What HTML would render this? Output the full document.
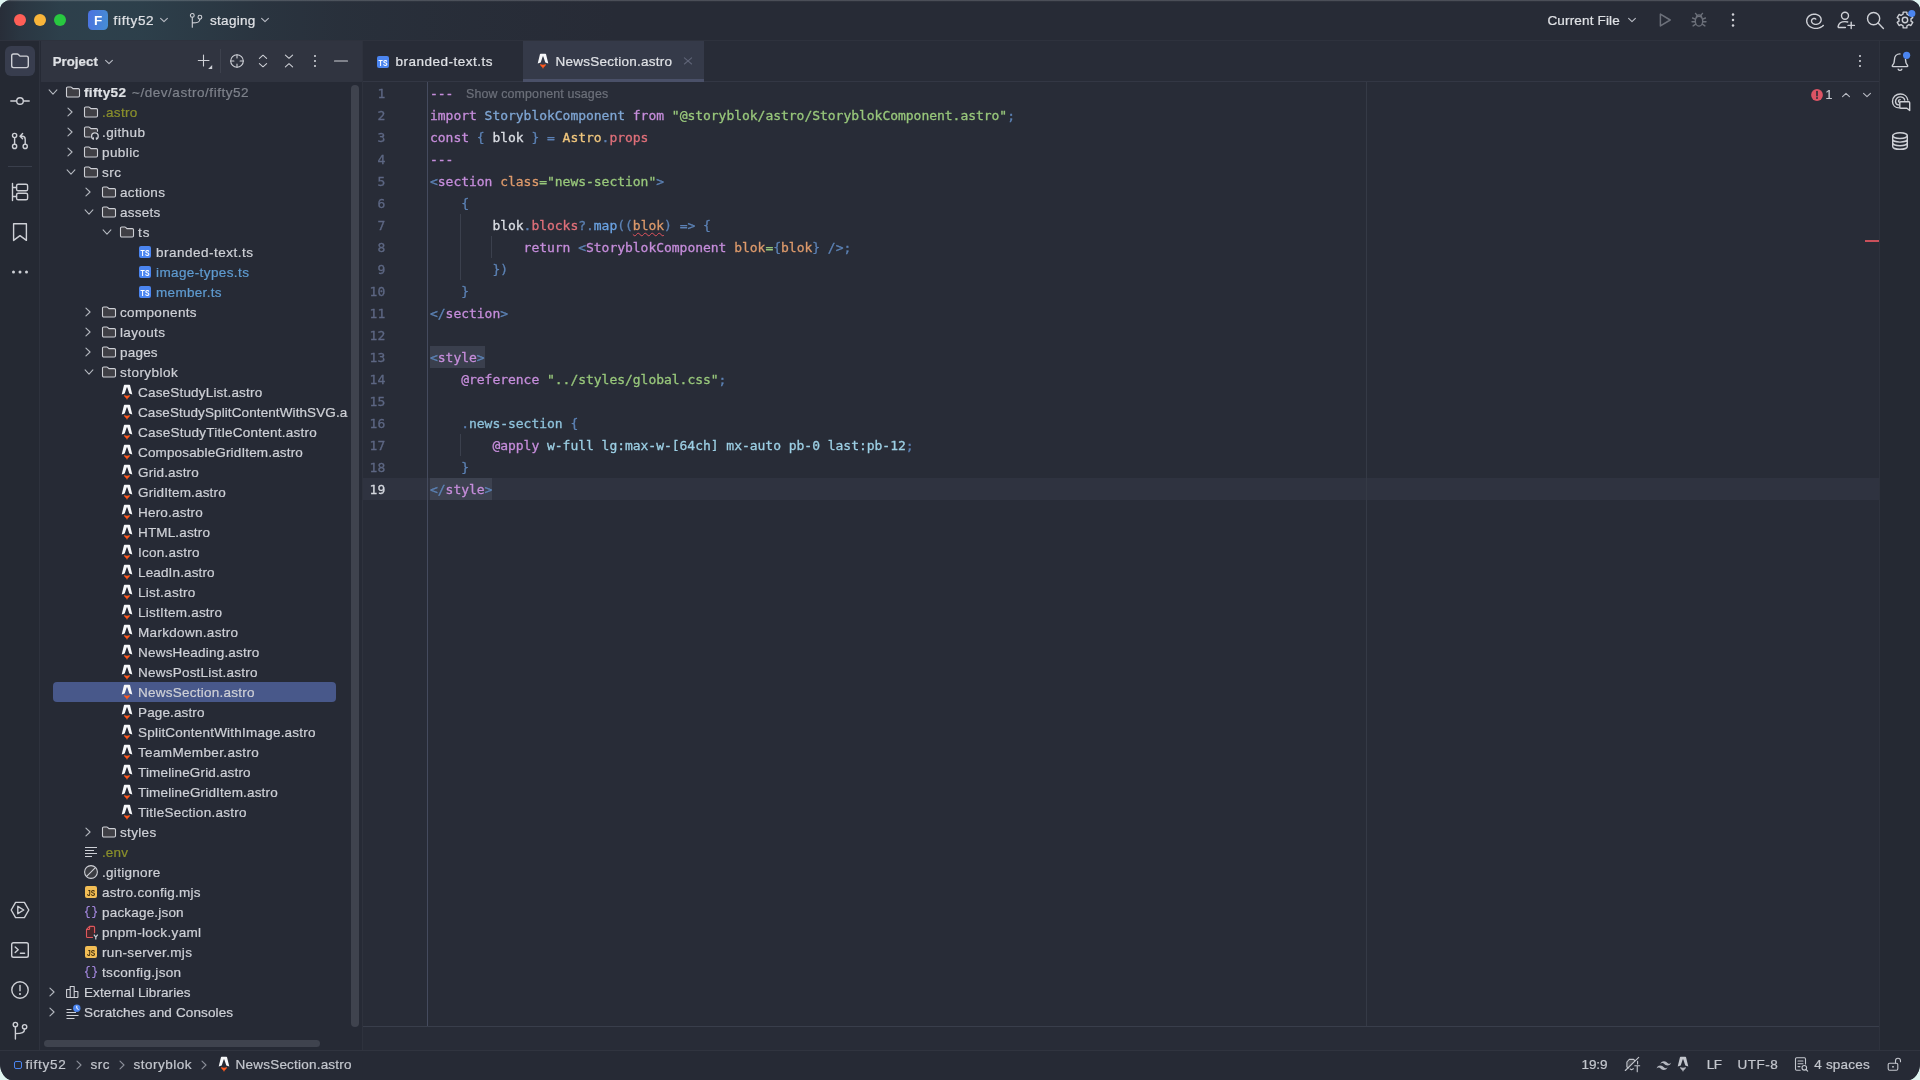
<!DOCTYPE html>
<html lang="en"><head><meta charset="utf-8"><title>fifty52 – NewsSection.astro</title>
<style>
*{box-sizing:border-box;margin:0;padding:0}
html,body{width:1920px;height:1080px;overflow:hidden;background:#dff4f0}
body{font-family:"Liberation Sans",sans-serif;font-size:13.5px;color:#ced0d6;letter-spacing:.2px;-webkit-font-smoothing:antialiased}
#win{position:absolute;left:0;top:0;width:1920px;height:1080px;border-radius:11px 11px 12px 12px / 10px 10px 17px 17px;overflow:hidden;background:#262a35}
#gl{position:absolute;left:0;top:0;width:1920px;height:1080px;will-change:transform}
.abs{position:absolute}
svg{position:absolute;overflow:visible}
.t{position:absolute;white-space:pre;line-height:20px;height:20px;margin-top:1px}
/* title bar */
#title{position:absolute;left:0;top:0;width:1920px;height:40px;background:#272b36}
#title .grad{position:absolute;left:0;top:0;width:900px;height:40px;background:linear-gradient(90deg,rgba(52,88,100,0.05) 0px,rgba(52,88,100,0.25) 20px,rgba(52,88,100,0.45) 60px,rgba(52,88,100,0.47) 100px,rgba(52,88,100,0.45) 140px,rgba(52,88,100,0.33) 200px,rgba(52,88,100,0.2) 260px,rgba(52,88,100,0.11) 340px,rgba(52,88,100,0.05) 450px,rgba(52,88,100,0) 620px)}
#title .hl{position:absolute;left:0;top:0;width:1920px;height:2px;background:linear-gradient(180deg,rgba(255,255,255,.17) 0,rgba(255,255,255,.17) 1px,rgba(255,255,255,.03) 1px,rgba(255,255,255,.03) 2px)}
#title .bb{position:absolute;left:0;top:40px;width:1920px;height:1px;background:#2e323d}
.tl{position:absolute;top:14px;width:12px;height:12px;border-radius:50%}
/* stripes */
#lstripe{position:absolute;left:0;top:41px;width:40px;height:1009px;background:#252933;border-right:1px solid #2e323d}
#rstripe{position:absolute;left:1879px;top:41px;width:41px;height:1009px;background:#252933;border-left:1px solid #2e323d}
/* project tool window */
#proj{position:absolute;left:41px;top:41px;width:321px;height:1009px;background:#262a35}
#projhead{position:absolute;left:0;top:0;width:321px;height:41px;background:#303440}
#split{position:absolute;left:362px;top:41px;width:1px;height:1009px;background:#2e323d}
/* editor */
#tabs{position:absolute;left:363px;top:41px;width:1516px;height:41px;background:#282c37;border-bottom:1px solid #333744}
#editor{position:absolute;left:363px;top:82px;width:1516px;height:968px;background:#282c37}
/* status bar */
#status{position:absolute;left:0;top:1050px;width:1920px;height:30px;background:#262a35;border-top:1px solid #30343f}
.code{font-family:"DejaVu Sans Mono","Liberation Mono",monospace;font-size:13px;letter-spacing:-0.028px}
.err{text-decoration:underline wavy #e0525c;text-decoration-thickness:1px;text-underline-offset:2px}
.t{-webkit-text-stroke:.22px currentColor}
.code{-webkit-text-stroke:.3px currentColor}

</style></head>
<body>
<div id="win"><div id="gl">
<div id="title"><div class="grad"></div><div class="hl"></div><div class="bb"></div>
<div class="tl" style="left:14px;background:#fe5f57"></div>
<div class="tl" style="left:34px;background:#f9b53a"></div>
<div class="tl" style="left:54px;background:#28c840"></div>
<div class="abs" style="left:88px;top:10px;width:20px;height:20px;border-radius:4.500px;background:linear-gradient(100deg,#4b73e0 5%,#468dd4 95%)"></div>
<span class="t " style="left:94.1px;top:10px;font-weight:bold;color:#fff;font-size:13.5px;letter-spacing:0;-webkit-text-stroke:0;">F</span>
<span class="t " style="left:113.6px;top:10px;color:#dfe1e5;letter-spacing:0.661px;">fifty52</span>
<svg style="left:156px;top:12.3px" width="16" height="16" viewBox="0 0 16 16" fill="none" ><path d="M4.6 6.3L8 9.7L11.4 6.3" stroke="#b8bcc4" stroke-width="1.1" stroke-linecap="round" stroke-linejoin="round"/></svg>
<svg style="left:187.5px;top:12px" width="16" height="16" viewBox="0 0 16 16" fill="none" ><circle cx="4.300" cy="3.400" r="1.900" stroke="#ced0d6" stroke-width="1.1" stroke-linecap="round" stroke-linejoin="round"/><circle cx="11.900" cy="5.200" r="1.900" stroke="#ced0d6" stroke-width="1.1" stroke-linecap="round" stroke-linejoin="round"/><path d="M4.300 5.400v9.800M11.900 7.200c0 2.900-2 3.700-7.600 3.700" stroke="#ced0d6" stroke-width="1.1" stroke-linecap="round" stroke-linejoin="round"/></svg>
<span class="t " style="left:210.1px;top:10px;color:#dfe1e5;letter-spacing:0.259px;">staging</span>
<svg style="left:257px;top:12.3px" width="16" height="16" viewBox="0 0 16 16" fill="none" ><path d="M4.6 6.3L8 9.7L11.4 6.3" stroke="#b8bcc4" stroke-width="1.1" stroke-linecap="round" stroke-linejoin="round"/></svg>
<span class="t " style="left:1547.4px;top:10px;color:#dfe1e5;letter-spacing:0.17px;">Current File</span>
<svg style="left:1624px;top:12.3px" width="16" height="16" viewBox="0 0 16 16" fill="none" ><path d="M4.6 6.3L8 9.7L11.4 6.3" stroke="#b8bcc4" stroke-width="1.1" stroke-linecap="round" stroke-linejoin="round"/></svg>
<svg style="left:1655px;top:10px" width="20" height="20" viewBox="0 0 20 20" fill="none" ><path d="M5.400 4.100v11.800l9.800-5.900z" stroke="#6c707a" stroke-width="1.500" stroke-linejoin="round" stroke-linecap="round"/></svg>
<svg style="left:1688.5px;top:10px" width="20" height="20" viewBox="0 0 20 20" fill="none" ><ellipse cx="10" cy="11.200" rx="3.700" ry="4.900" stroke="#6c707a" stroke-width="1.400" stroke-linecap="round" stroke-linejoin="round"/><path d="M7.300 7.600c.200-1.700 1.200-2.700 2.700-2.700s2.500 1 2.700 2.700" stroke="#6c707a" stroke-width="1.400" stroke-linecap="round" stroke-linejoin="round"/><path d="M7.700 4.900L6.500 3.400M12.300 4.900l1.200-1.500M6.300 9.200L3.600 8M13.700 9.200l2.700-1.200M6.300 11.700H3M13.700 11.700H17M6.700 14.200l-2.600 1.700M13.300 14.200l2.600 1.700" stroke="#6c707a" stroke-width="1.400" stroke-linecap="round" stroke-linejoin="round"/></svg>
<svg style="left:1722.5px;top:10px" width="20" height="20" viewBox="0 0 20 20" fill="none" ><circle cx="10" cy="4.6" r="1.25" fill="#ced0d6"/><circle cx="10" cy="10" r="1.25" fill="#ced0d6"/><circle cx="10" cy="15.4" r="1.25" fill="#ced0d6"/></svg>
<svg style="left:1804.5px;top:10px" width="20" height="20" viewBox="0 0 20 20" fill="none" ><path d="M18.35 15.37 L17.39 16.21 L16.33 16.92 L15.17 17.50 L13.94 17.93 L12.66 18.22 L11.36 18.36 L10.07 18.35 L8.80 18.19 L7.59 17.89 L6.44 17.46 L5.39 16.90 L4.44 16.24 L3.62 15.48 L2.93 14.65 L2.39 13.75 L2.01 12.81 L1.78 11.85 L1.71 10.88 L1.79 9.92 L2.02 9.00 L2.40 8.11 L2.91 7.29 L3.53 6.55 L4.27 5.89 L5.09 5.33 L5.98 4.88 L6.92 4.53 L7.90 4.31 L8.89 4.19 L9.87 4.20 L10.84 4.31 L11.76 4.54 L12.62 4.86 L13.42 5.27 L14.12 5.76 L14.74 6.33 L15.25 6.94 L15.64 7.60 L15.93 8.29 L16.09 9.00 L16.14 9.70 L16.08 10.40 L15.90 11.06 L15.63 11.69 L15.26 12.27 L14.81 12.79 L14.29 13.25 L13.71 13.63 L13.08 13.94 L12.43 14.17 L11.76 14.31 L11.08 14.38 L10.42 14.36 L9.78 14.27 L9.17 14.10 L8.61 13.88 L8.10 13.59 L7.66 13.26 L7.29 12.88 L6.99 12.48 L6.76 12.05 L6.62 11.62 L6.55 11.18 L6.55 10.76 L6.63 10.35 L6.77 9.96 L6.96 9.61 L7.21 9.30 L7.50 9.03 L7.82 8.80 L8.16 8.63 L8.52 8.50 L8.88 8.43 L9.23 8.41 L9.57 8.43 L9.88 8.50 L10.17 8.60 L10.42 8.74 L10.62 8.91 L10.76 9.11" stroke="#ced0d6" stroke-width="1.4" stroke-linecap="round" stroke-linejoin="round"/></svg>
<svg style="left:1836px;top:10px" width="20" height="20" viewBox="0 0 20 20" fill="none" ><circle cx="9" cy="5.800" r="3.500" stroke="#ced0d6" stroke-width="1.4" stroke-linecap="round" stroke-linejoin="round"/><path d="M9.400 17.500H3c-.6 0-1-.5-.9-1 .6-3 3.200-4.900 6.900-4.900 1 0 1.900.1 2.700.4M15.200 12.200v6.400M12 15.400h6.400" stroke="#ced0d6" stroke-width="1.4" stroke-linecap="round" stroke-linejoin="round"/></svg>
<svg style="left:1865px;top:10px" width="20" height="20" viewBox="0 0 20 20" fill="none" ><circle cx="8.600" cy="8.600" r="6.100" stroke="#ced0d6" stroke-width="1.4" stroke-linecap="round" stroke-linejoin="round" stroke-width="1.400"/><path d="M13.100 13.100l5.300 5.300" stroke="#ced0d6" stroke-width="1.4" stroke-linecap="round" stroke-linejoin="round" stroke-width="1.400"/></svg>
<svg style="left:1894.6px;top:10.4px" width="20" height="20" viewBox="0 0 20 20" fill="none" ><path d="M8.18 2.11L11.82 2.11L11.99 4.23L14.00 5.40L15.92 4.48L17.75 7.63L15.99 8.84L15.99 11.16L17.75 12.37L15.92 15.52L14.00 14.60L11.99 15.77L11.82 17.89L8.18 17.89L8.01 15.77L6.00 14.60L4.08 15.52L2.25 12.37L4.01 11.16L4.01 8.84L2.25 7.63L4.08 4.48L6.00 5.40L8.01 4.23Z" stroke="#ced0d6" stroke-width="1.4" stroke-linecap="round" stroke-linejoin="round" stroke-width="1.300" stroke-linejoin="round"/><circle cx="10" cy="10" r="2.700" stroke="#ced0d6" stroke-width="1.4" stroke-linecap="round" stroke-linejoin="round" stroke-width="1.300"/><circle cx="16.800" cy="3.500" r="3.600" fill="#4b85f0"/></svg>
</div>
<div id="lstripe"></div>
<div class="abs" style="left:5px;top:46px;width:30px;height:30px;border-radius:6px;background:#383d4e"></div>
<svg style="left:10px;top:51px" width="20" height="20" viewBox="0 0 20 20" fill="none" ><path d="M1.7 4.8a1.8 1.8 0 0 1 1.8-1.800h3.600a1.800 1.800 0 0 1 1.270.530l1.600 1.600h6.530a1.800 1.800 0 0 1 1.800 1.800v7.900a1.800 1.800 0 0 1-1.800 1.800H3.500a1.800 1.800 0 0 1-1.800-1.800z" stroke="#ced0d6" stroke-width="1.4" stroke-linecap="round" stroke-linejoin="round"/></svg>
<svg style="left:10px;top:91px" width="20" height="20" viewBox="0 0 20 20" fill="none" ><circle cx="10" cy="10" r="3.3" stroke="#ced0d6" stroke-width="1.4" stroke-linecap="round" stroke-linejoin="round"/><path d="M.8 10h5.6M13.6 10h5.6" stroke="#ced0d6" stroke-width="1.4" stroke-linecap="round" stroke-linejoin="round"/></svg>
<svg style="left:10px;top:131px" width="20" height="20" viewBox="0 0 20 20" fill="none" ><circle cx="4.6" cy="4.5" r="2.1" stroke="#ced0d6" stroke-width="1.4" stroke-linecap="round" stroke-linejoin="round"/><circle cx="4.6" cy="15.4" r="2.1" stroke="#ced0d6" stroke-width="1.4" stroke-linecap="round" stroke-linejoin="round"/><circle cx="15.2" cy="15.4" r="2.1" stroke="#ced0d6" stroke-width="1.4" stroke-linecap="round" stroke-linejoin="round"/><path d="M4.6 6.8v6.4M15.2 13.2V8.2a3 3 0 0 0-3-3h-1.6M12.6 2.6l-2.6 2.6 2.6 2.6" stroke="#ced0d6" stroke-width="1.4" stroke-linecap="round" stroke-linejoin="round"/></svg>
<div class="abs" style="left:8px;top:166px;width:24px;height:1px;background:#3a3f4c"></div>
<svg style="left:10px;top:182px" width="20" height="20" viewBox="0 0 20 20" fill="none" ><path d="M2.5 1.5v17M2.5 5.5h4M2.5 14.5h4" stroke="#ced0d6" stroke-width="1.4" stroke-linecap="round" stroke-linejoin="round"/><rect x="6.6" y="2.2" width="11" height="6.6" rx="1.6" stroke="#ced0d6" stroke-width="1.4" stroke-linecap="round" stroke-linejoin="round"/><rect x="6.6" y="11.2" width="11" height="6.6" rx="1.6" stroke="#ced0d6" stroke-width="1.4" stroke-linecap="round" stroke-linejoin="round"/></svg>
<svg style="left:10px;top:222px" width="20" height="20" viewBox="0 0 20 20" fill="none" ><path d="M3.6 1.8h12.8v16.6L10 13.6l-6.4 4.8z" stroke="#ced0d6" stroke-width="1.4" stroke-linecap="round" stroke-linejoin="round"/></svg>
<svg style="left:10px;top:262px" width="20" height="20" viewBox="0 0 20 20" fill="none" ><circle cx="3.5" cy="10" r="1.5" fill="#ced0d6"/><circle cx="10" cy="10" r="1.5" fill="#ced0d6"/><circle cx="16.5" cy="10" r="1.5" fill="#ced0d6"/></svg>
<svg style="left:10px;top:900px" width="20" height="20" viewBox="0 0 20 20" fill="none" ><path d="M5.6 2.4h8.8l4.4 7.6-4.4 7.6H5.6L1.2 10z" stroke="#ced0d6" stroke-width="1.4" stroke-linecap="round" stroke-linejoin="round"/><path d="M7.8 6.3v7.4l6-3.7z" stroke="#ced0d6" stroke-width="1.4" stroke-linecap="round" stroke-linejoin="round"/></svg>
<svg style="left:10px;top:940px" width="20" height="20" viewBox="0 0 20 20" fill="none" ><rect x="1.7" y="2.7" width="16.6" height="14.6" rx="1.8" stroke="#ced0d6" stroke-width="1.4" stroke-linecap="round" stroke-linejoin="round"/><path d="M5.2 7l3 2.8-3 2.8M10.4 13.2h4.2" stroke="#ced0d6" stroke-width="1.4" stroke-linecap="round" stroke-linejoin="round"/></svg>
<svg style="left:10px;top:980px" width="20" height="20" viewBox="0 0 20 20" fill="none" ><circle cx="10" cy="10" r="8.2" stroke="#ced0d6" stroke-width="1.4" stroke-linecap="round" stroke-linejoin="round"/><path d="M10 5.4v5.4" stroke="#ced0d6" stroke-width="1.4" stroke-linecap="round" stroke-linejoin="round" stroke-width="1.6"/><circle cx="10" cy="14" r="1.05" fill="#ced0d6"/></svg>
<svg style="left:10px;top:1020px" width="20" height="20" viewBox="0 0 20 20" fill="none" ><circle cx="5.4" cy="4.6" r="2.2" stroke="#ced0d6" stroke-width="1.4" stroke-linecap="round" stroke-linejoin="round"/><circle cx="14.6" cy="6.8" r="2.2" stroke="#ced0d6" stroke-width="1.4" stroke-linecap="round" stroke-linejoin="round"/><path d="M5.4 6.9V19M14.6 9.1c0 3.4-2.4 4.5-9.2 4.5" stroke="#ced0d6" stroke-width="1.4" stroke-linecap="round" stroke-linejoin="round"/></svg>
<div id="rstripe"></div>
<svg style="left:1890px;top:51.6px" width="20" height="20" viewBox="0 0 20 20" fill="none" ><path d="M10 1.9c-3.4 0-5.5 2.5-5.5 5.6 0 2.9-.7 4.6-2.1 6.1-.3.4-.1 1 .5 1h14.2c.6 0 .8-.6.5-1-1.4-1.5-2.1-3.2-2.1-6.100" stroke="#ced0d6" stroke-width="1.4" stroke-linecap="round" stroke-linejoin="round"/><path d="M8.2 17.2c.4.8 1 1.2 1.8 1.2s1.400-.4 1.800-1.2" stroke="#ced0d6" stroke-width="1.4" stroke-linecap="round" stroke-linejoin="round"/><circle cx="16.600" cy="3.300" r="3.600" fill="#4b85f0"/></svg>
<svg style="left:1890.5px;top:92px" width="20" height="20" viewBox="0 0 20 20" fill="none" ><path d="M8.200 15.900C4.3 15.900 1.500 13.200 1.500 9.400 1.500 5.100 5 2 9.300 2c4 0 7 2.600 7.500 6" stroke="#ced0d6" stroke-width="1.4" stroke-linecap="round" stroke-linejoin="round"/><path d="M7.500 12.900C5.700 12.600 4.500 11.200 4.500 9.400c0-2.600 2.100-4.500 4.800-4.500 2.300 0 3.900 1.300 4.400 3.200" stroke="#ced0d6" stroke-width="1.4" stroke-linecap="round" stroke-linejoin="round"/><path d="M8.400 10.200c-.5-.1-.900-.5-.900-1.100 0-.9.800-1.500 1.700-1.500" stroke="#ced0d6" stroke-width="1.4" stroke-linecap="round" stroke-linejoin="round"/><path d="M9.700 9.800h8.100c.5 0 .9.400.9.900v7.800l-2.800-2.300h-6.200c-.5 0-.9-.4-.9-.9v-4.600c0-.5.400-.9.900-.9z" fill="#252933" stroke="#ced0d6" stroke-width="1.4" stroke-linecap="round" stroke-linejoin="round"/></svg>
<svg style="left:1890px;top:131px" width="20" height="20" viewBox="0 0 20 20" fill="none" ><ellipse cx="10" cy="4.6" rx="7.300" ry="2.900" stroke="#ced0d6" stroke-width="1.4" stroke-linecap="round" stroke-linejoin="round"/><path d="M2.700 4.600v10.800c0 1.600 3.300 2.900 7.300 2.900s7.300-1.300 7.300-2.900V4.600M2.700 8.200c0 1.600 3.300 2.900 7.300 2.900s7.300-1.300 7.300-2.900M2.700 11.800c0 1.600 3.300 2.900 7.300 2.900s7.300-1.300 7.300-2.900" stroke="#ced0d6" stroke-width="1.4" stroke-linecap="round" stroke-linejoin="round"/></svg>
<div id="proj"><div id="projhead"></div></div><div id="split"></div>
<span class="t " style="left:52.7px;top:51px;color:#dfe1e5;letter-spacing:0.064px;font-size:13.2px;font-weight:bold;">Project</span>
<svg style="left:101px;top:53.5px" width="16" height="16" viewBox="0 0 16 16" fill="none" ><path d="M4.6 6.3L8 9.7L11.4 6.3" stroke="#b8bcc4" stroke-width="1.1" stroke-linecap="round" stroke-linejoin="round"/></svg>
<svg style="left:196px;top:53px" width="16" height="16" viewBox="0 0 16 16" fill="none" ><path d="M7.500 2v11M2.300 7.500h10.700" stroke="#ced0d6" stroke-width="1.100" stroke-linecap="round" stroke-linejoin="round"/><path d="M16.200 12.100v3.900h-4z" fill="#ced0d6"/></svg>
<div class="abs" style="left:220px;top:49px;width:1px;height:24px;background:#3d414d"></div>
<svg style="left:229px;top:53px" width="16" height="16" viewBox="0 0 16 16" fill="none" ><circle cx="8" cy="8" r="6.300" stroke="#ced0d6" stroke-width="1.100" stroke-linecap="round" stroke-linejoin="round"/><path d="M8 1.700v3.200M8 11.100v3.200M1.700 8h3.200M11.100 8h3.200" stroke="#ced0d6" stroke-width="1.100" stroke-linecap="round" stroke-linejoin="round"/></svg>
<svg style="left:255px;top:53px" width="16" height="16" viewBox="0 0 16 16" fill="none" ><path d="M4.400 5.300L8 2.200l3.600 3.100M4.400 10.700L8 13.800l3.600-3.100" stroke="#ced0d6" stroke-width="1.100" stroke-linecap="round" stroke-linejoin="round"/></svg>
<svg style="left:281px;top:53px" width="16" height="16" viewBox="0 0 16 16" fill="none" ><path d="M4.400 2.100L8 5.300l3.600-3.200M4.400 13.900L8 10.700l3.600 3.200" stroke="#ced0d6" stroke-width="1.100" stroke-linecap="round" stroke-linejoin="round"/></svg>
<svg style="left:305px;top:51px" width="20" height="20" viewBox="0 0 20 20" fill="none" ><circle cx="10" cy="5" r="1.05" fill="#ced0d6"/><circle cx="10" cy="10" r="1.05" fill="#ced0d6"/><circle cx="10" cy="15" r="1.05" fill="#ced0d6"/></svg>
<svg style="left:333px;top:53px" width="16" height="16" viewBox="0 0 16 16" fill="none" ><path d="M1.500 8h13" stroke="#ced0d6" stroke-width="1.100" stroke-linecap="round" stroke-linejoin="round" stroke-width="1.200"/></svg>
<div id="tabs"></div>
<div class="abs" style="left:523px;top:41px;width:181px;height:41px;background:#353a49"></div>
<div class="abs" style="left:523px;top:79px;width:181px;height:3px;background:#4a5068"></div>
<svg style="left:374.5px;top:53.5px" width="16" height="16" viewBox="0 0 16 16" fill="none" ><rect x="2" y="2" width="12" height="12" rx="2" fill="#4b85f0"/><text x="3.600" y="12" textLength="9" lengthAdjust="spacingAndGlyphs" font-family="Liberation Sans,sans-serif" font-weight="bold" font-size="9.600" fill="#fff">TS</text></svg>
<span class="t " style="left:395.4px;top:51px;color:#dfe1e5;letter-spacing:0.503px;">branded-text.ts</span>
<svg style="left:535px;top:53px" width="16" height="16" viewBox="0 0 16 16" fill="none" ><path d="M5.6 .7H10.4Q10.9 .7 11.05 1.2L13.3 10.6Q11.9 9.9 10.3 9.6L8.3 3.5Q8 2.9 7.7 3.5L5.7 9.6Q4.1 9.9 2.7 10.6L4.95 1.2Q5.1 .7 5.6 .7Z" fill="#f6f7f9"/><path d="M5.1 11Q8 12.5 10.9 11Q11 12.9 9.4 13.7Q8.4 14.2 8.2 15.4Q8 15.9 7.8 15.4Q7.6 14.2 6.600 13.700Q5 12.900 5.100 11Z" fill="#ff5a1f"/></svg>
<span class="t " style="left:555.6px;top:51px;color:#dfe1e5;letter-spacing:0.24px;">NewsSection.astro</span>
<svg style="left:680px;top:53px" width="16" height="16" viewBox="0 0 16 16" fill="none" ><path d="M4.400 4.800l7.200 6.200M11.600 4.800l-7.200 6.200" stroke="#5e6376" stroke-width="1.100" stroke-linecap="round"/></svg>
<svg style="left:1850px;top:51px" width="20" height="20" viewBox="0 0 20 20" fill="none" ><circle cx="10" cy="5" r="1.05" fill="#ced0d6"/><circle cx="10" cy="10" r="1.05" fill="#ced0d6"/><circle cx="10" cy="15" r="1.05" fill="#ced0d6"/></svg>
<div id="status"></div>
<div class="abs" style="left:13.800px;top:1060.500px;width:8px;height:8px;border:1.500px solid #4b85f0;border-radius:2px"></div>
<span class="t " style="left:25.4px;top:1054px;color:#c3c6cd;letter-spacing:0.711px;">fifty52</span>
<svg style="left:71px;top:1056.5px" width="16" height="16" viewBox="0 0 16 16" fill="none" ><path d="M6.0 4.2L10.0 8L6.0 11.8" stroke="#8b8f99" stroke-width="1.1" stroke-linecap="round" stroke-linejoin="round"/></svg>
<span class="t " style="left:90.6px;top:1054px;color:#c3c6cd;letter-spacing:0.45px;">src</span>
<svg style="left:114px;top:1056.5px" width="16" height="16" viewBox="0 0 16 16" fill="none" ><path d="M6.0 4.2L10.0 8L6.0 11.8" stroke="#8b8f99" stroke-width="1.1" stroke-linecap="round" stroke-linejoin="round"/></svg>
<span class="t " style="left:133.6px;top:1054px;color:#c3c6cd;letter-spacing:0.484px;">storyblok</span>
<svg style="left:196px;top:1056.5px" width="16" height="16" viewBox="0 0 16 16" fill="none" ><path d="M6.0 4.2L10.0 8L6.0 11.8" stroke="#8b8f99" stroke-width="1.1" stroke-linecap="round" stroke-linejoin="round"/></svg>
<svg style="left:216px;top:1056px" width="16" height="16" viewBox="0 0 16 16" fill="none" ><path d="M5.6 .7H10.4Q10.9 .7 11.05 1.2L13.3 10.6Q11.9 9.9 10.3 9.6L8.3 3.5Q8 2.9 7.7 3.5L5.7 9.6Q4.1 9.9 2.7 10.6L4.95 1.2Q5.1 .7 5.6 .7Z" fill="#f6f7f9"/><path d="M5.1 11Q8 12.5 10.9 11Q11 12.9 9.4 13.7Q8.4 14.2 8.2 15.4Q8 15.9 7.8 15.4Q7.6 14.2 6.600 13.700Q5 12.900 5.100 11Z" fill="#ff5a1f"/></svg>
<span class="t " style="left:235.6px;top:1054px;color:#c3c6cd;letter-spacing:0.209px;">NewsSection.astro</span>
<span class="t " style="left:1581.5px;top:1054px;color:#c3c6cd;letter-spacing:-0.094px;">19:9</span>
<span class="t " style="left:1706.7px;top:1054px;color:#c3c6cd;letter-spacing:-0.566px;">LF</span>
<span class="t " style="left:1737.6px;top:1054px;color:#c3c6cd;letter-spacing:0.487px;">UTF-8</span>
<span class="t " style="left:1814.2px;top:1054px;color:#c3c6cd;letter-spacing:0.222px;">4 spaces</span>
<svg style="left:1624px;top:1056px" width="16" height="16" viewBox="0 0 16 16" fill="none" ><path d="M2.900 11V6L5.300 3.400h4.300l1.500 1.500-6.800 6.900z" fill="#43464e"/><path d="M4.400 11.900L2.900 11V6L5.300 3.400h4.300l1.300 1.300M6.200 13.100l1.300.600 1.900-.900" stroke="#c3c6cd" stroke-width="1.100" stroke-linecap="round" stroke-linejoin="round"/><path d="M1.300 14.500L14.700 1.300" stroke="#c3c6cd" stroke-width="1.100" stroke-linecap="round" stroke-linejoin="round"/><path d="M10.800 9.700h4.900M13.250 9.700v6M13.600 5.300v2.600" stroke="#c3c6cd" stroke-width="1.100" stroke-linecap="round" stroke-linejoin="round"/></svg>
<svg style="left:1656px;top:1056.9px" width="16" height="16" viewBox="0 0 16 16" fill="none" ><path d="M8 4.200c-2 0-3.200 1-3.700 3 .7-1 1.600-1.400 2.600-1.100.6.100 1 .6 1.400 1 .700.700 1.500 1.500 3.200 1.500 2 0 3.200-1 3.700-3-.700 1-1.600 1.400-2.600 1.100-.600-.100-1-.600-1.400-1-.700-.700-1.500-1.500-3.200-1.500zM4.300 8.600c-2 0-3.200 1-3.700 3 .700-1 1.600-1.400 2.600-1.100.600.100 1 .600 1.400 1 .700.700 1.500 1.500 3.200 1.500 2 0 3.200-1 3.700-3-.700 1-1.600 1.400-2.600 1.100-.600-.100-1-.600-1.400-1-.700-.700-1.500-1.500-3.200-1.500z" fill="#b4b7bf"/></svg>
<svg style="left:1675px;top:1056.4px" width="16" height="16" viewBox="0 0 16 16" fill="none" ><path d="M5.6 .7H10.4Q10.9 .7 11.05 1.2L13.3 10.6Q11.9 9.9 10.3 9.6L8.3 3.5Q8 2.9 7.7 3.5L5.7 9.6Q4.1 9.9 2.7 10.6L4.95 1.2Q5.1 .7 5.6 .7Z" fill="#c3c6cd"/><path d="M5.1 11Q8 12.5 10.9 11Q11 12.9 9.4 13.7Q8.4 14.2 8.2 15.4Q8 15.9 7.8 15.4Q7.6 14.2 6.600 13.700Q5 12.900 5.100 11Z" fill="#b4b7bf"/></svg>
<svg style="left:1792.5px;top:1056px" width="16" height="16" viewBox="0 0 16 16" fill="none" ><path d="M7.200 14.200H3.600c-.6 0-1.100-.500-1.100-1.100V2.900c0-.6.500-1.100 1.100-1.100h7.800c.6 0 1.100.5 1.100 1.100v5M5 5h5M5 7.800h5M5 10.600h2" stroke="#c3c6cd" stroke-width="1.100" stroke-linecap="round" stroke-linejoin="round"/><circle cx="11.300" cy="11.800" r="2.300" stroke="#c3c6cd" stroke-width="1.100" stroke-linecap="round" stroke-linejoin="round"/><path d="M13 13.500l1.700 1.700" stroke="#c3c6cd" stroke-width="1.100" stroke-linecap="round" stroke-linejoin="round"/></svg>
<svg style="left:1886.4px;top:1056px" width="16" height="16" viewBox="0 0 16 16" fill="none" ><rect x="2.200" y="7.200" width="9.600" height="7" rx="1.400" stroke="#c3c6cd" stroke-width="1.100" stroke-linecap="round" stroke-linejoin="round"/><path d="M9.500 7V4.800c0-1.500 1.100-2.600 2.500-2.600s2.500 1.100 2.500 2.600v.9" stroke="#c3c6cd" stroke-width="1.100" stroke-linecap="round" stroke-linejoin="round"/><rect x="6.200" y="10" width="1.600" height="1.600" fill="#c3c6cd"/></svg>
<div id="tree" class="abs" style="left:41px;top:82px;width:306.5px;height:950px;overflow:hidden">
<svg style="left:3.5px;top:2px" width="16" height="16" viewBox="0 0 16 16" fill="none" ><path d="M4.1 5.95L8 10.05L11.9 5.95" stroke="#b4b8bf" stroke-width="1.1" stroke-linecap="round" stroke-linejoin="round"/></svg>
<svg style="left:24px;top:2px" width="16" height="16" viewBox="0 0 16 16" fill="none" ><path d="M1.5 4.2 a1.2 1.2 0 0 1 1.2-1.2 h3.1 a1.2 1.2 0 0 1 .85.35 l1.25 1.25 h5.4 a1.2 1.2 0 0 1 1.2 1.2 v6 a1.2 1.2 0 0 1-1.2 1.2 h-10.6 a1.2 1.2 0 0 1-1.2-1.2 z" fill="#3f3f45" stroke="#ced0d6" stroke-width="1.1" stroke-linejoin="round"/></svg>
<span class="t" style="left:43px;top:0px;font-weight:bold;color:#dfe1e5;letter-spacing:0.356px">fifty52</span>
<span class="t" style="left:91px;top:0px;color:#7e828b;letter-spacing:0.537px">~/dev/astro/fifty52</span>
<svg style="left:21.1px;top:21.5px" width="16" height="16" viewBox="0 0 16 16" fill="none" ><path d="M5.95 4.1L10.05 8L5.95 11.9" stroke="#b4b8bf" stroke-width="1.1" stroke-linecap="round" stroke-linejoin="round"/></svg>
<svg style="left:42px;top:22px" width="16" height="16" viewBox="0 0 16 16" fill="none" ><path d="M1.5 4.2 a1.2 1.2 0 0 1 1.2-1.2 h3.1 a1.2 1.2 0 0 1 .85.35 l1.25 1.25 h5.4 a1.2 1.2 0 0 1 1.2 1.2 v6 a1.2 1.2 0 0 1-1.2 1.2 h-10.6 a1.2 1.2 0 0 1-1.2-1.2 z" fill="#3f3f45" stroke="#ced0d6" stroke-width="1.1" stroke-linejoin="round"/></svg>
<span class="t" style="left:61px;top:20px;color:#8a8f2c;letter-spacing:0.307px;">.astro</span>
<svg style="left:21.1px;top:41.5px" width="16" height="16" viewBox="0 0 16 16" fill="none" ><path d="M5.95 4.1L10.05 8L5.95 11.9" stroke="#b4b8bf" stroke-width="1.1" stroke-linecap="round" stroke-linejoin="round"/></svg>
<svg style="left:42px;top:42px" width="16" height="16" viewBox="0 0 16 16" fill="none" ><path d="M7.2 13 h-4.5 a1.2 1.2 0 0 1-1.2-1.2 v-7.6 a1.2 1.2 0 0 1 1.2-1.2 h3.1 a1.2 1.2 0 0 1 .85.35 l1.25 1.25 h5.4 a1.2 1.2 0 0 1 1.2 1.2 v1.4" fill="#3f3f45" stroke="#ced0d6" stroke-width="1.1" stroke-linejoin="round" stroke-linecap="round"/><circle cx="11.900" cy="12.100" r="3.300" stroke="#ced0d6" stroke-width="1.350" fill="#262a35"/><path d="M10.700 16.300v-2.100l1.200-.700 1.200.700v2.100z" fill="#262a35"/><path d="M10.500 15v-1.300M13.300 15v-1.300" stroke="#ced0d6" stroke-width="1" stroke-linecap="round"/></svg>
<span class="t" style="left:61px;top:40px;letter-spacing:0.392px;">.github</span>
<svg style="left:21.1px;top:61.5px" width="16" height="16" viewBox="0 0 16 16" fill="none" ><path d="M5.95 4.1L10.05 8L5.95 11.9" stroke="#b4b8bf" stroke-width="1.1" stroke-linecap="round" stroke-linejoin="round"/></svg>
<svg style="left:42px;top:62px" width="16" height="16" viewBox="0 0 16 16" fill="none" ><path d="M1.5 4.2 a1.2 1.2 0 0 1 1.2-1.2 h3.1 a1.2 1.2 0 0 1 .85.35 l1.25 1.25 h5.4 a1.2 1.2 0 0 1 1.2 1.2 v6 a1.2 1.2 0 0 1-1.2 1.2 h-10.6 a1.2 1.2 0 0 1-1.2-1.2 z" fill="#3f3f45" stroke="#ced0d6" stroke-width="1.1" stroke-linejoin="round"/></svg>
<span class="t" style="left:61px;top:60px;letter-spacing:0.404px;">public</span>
<svg style="left:21.5px;top:82px" width="16" height="16" viewBox="0 0 16 16" fill="none" ><path d="M4.1 5.95L8 10.05L11.9 5.95" stroke="#b4b8bf" stroke-width="1.1" stroke-linecap="round" stroke-linejoin="round"/></svg>
<svg style="left:42px;top:82px" width="16" height="16" viewBox="0 0 16 16" fill="none" ><path d="M1.5 4.2 a1.2 1.2 0 0 1 1.2-1.2 h3.1 a1.2 1.2 0 0 1 .85.35 l1.25 1.25 h5.4 a1.2 1.2 0 0 1 1.2 1.2 v6 a1.2 1.2 0 0 1-1.2 1.2 h-10.6 a1.2 1.2 0 0 1-1.2-1.2 z" fill="#3f3f45" stroke="#ced0d6" stroke-width="1.1" stroke-linejoin="round"/></svg>
<span class="t" style="left:61px;top:80px;letter-spacing:0.45px;">src</span>
<svg style="left:39.1px;top:101.5px" width="16" height="16" viewBox="0 0 16 16" fill="none" ><path d="M5.95 4.1L10.05 8L5.95 11.9" stroke="#b4b8bf" stroke-width="1.1" stroke-linecap="round" stroke-linejoin="round"/></svg>
<svg style="left:60px;top:102px" width="16" height="16" viewBox="0 0 16 16" fill="none" ><path d="M1.5 4.2 a1.2 1.2 0 0 1 1.2-1.2 h3.1 a1.2 1.2 0 0 1 .85.35 l1.25 1.25 h5.4 a1.2 1.2 0 0 1 1.2 1.2 v6 a1.2 1.2 0 0 1-1.2 1.2 h-10.6 a1.2 1.2 0 0 1-1.2-1.2 z" fill="#3f3f45" stroke="#ced0d6" stroke-width="1.1" stroke-linejoin="round"/></svg>
<span class="t" style="left:79px;top:100px;letter-spacing:0.353px;">actions</span>
<svg style="left:39.5px;top:122px" width="16" height="16" viewBox="0 0 16 16" fill="none" ><path d="M4.1 5.95L8 10.05L11.9 5.95" stroke="#b4b8bf" stroke-width="1.1" stroke-linecap="round" stroke-linejoin="round"/></svg>
<svg style="left:60px;top:122px" width="16" height="16" viewBox="0 0 16 16" fill="none" ><path d="M1.5 4.2 a1.2 1.2 0 0 1 1.2-1.2 h3.1 a1.2 1.2 0 0 1 .85.35 l1.25 1.25 h5.4 a1.2 1.2 0 0 1 1.2 1.2 v6 a1.2 1.2 0 0 1-1.2 1.2 h-10.6 a1.2 1.2 0 0 1-1.2-1.2 z" fill="#3f3f45" stroke="#ced0d6" stroke-width="1.1" stroke-linejoin="round"/></svg>
<span class="t" style="left:79px;top:120px;letter-spacing:0.254px;">assets</span>
<svg style="left:57.5px;top:142px" width="16" height="16" viewBox="0 0 16 16" fill="none" ><path d="M4.1 5.95L8 10.05L11.9 5.95" stroke="#b4b8bf" stroke-width="1.1" stroke-linecap="round" stroke-linejoin="round"/></svg>
<svg style="left:78px;top:142px" width="16" height="16" viewBox="0 0 16 16" fill="none" ><path d="M1.5 4.2 a1.2 1.2 0 0 1 1.2-1.2 h3.1 a1.2 1.2 0 0 1 .85.35 l1.25 1.25 h5.4 a1.2 1.2 0 0 1 1.2 1.2 v6 a1.2 1.2 0 0 1-1.2 1.2 h-10.6 a1.2 1.2 0 0 1-1.2-1.2 z" fill="#3f3f45" stroke="#ced0d6" stroke-width="1.1" stroke-linejoin="round"/></svg>
<span class="t" style="left:97px;top:140px;letter-spacing:1.084px;">ts</span>
<svg style="left:96px;top:162px" width="16" height="16" viewBox="0 0 16 16" fill="none" ><rect x="2" y="2" width="12" height="12" rx="2" fill="#4b85f0"/><text x="3.600" y="12" textLength="9" lengthAdjust="spacingAndGlyphs" font-family="Liberation Sans,sans-serif" font-weight="bold" font-size="9.600" fill="#fff">TS</text></svg>
<span class="t" style="left:115px;top:160px;letter-spacing:0.488px;">branded-text.ts</span>
<svg style="left:96px;top:182px" width="16" height="16" viewBox="0 0 16 16" fill="none" ><rect x="2" y="2" width="12" height="12" rx="2" fill="#4b85f0"/><text x="3.600" y="12" textLength="9" lengthAdjust="spacingAndGlyphs" font-family="Liberation Sans,sans-serif" font-weight="bold" font-size="9.600" fill="#fff">TS</text></svg>
<span class="t" style="left:115px;top:180px;color:#5f9bd0;letter-spacing:0.393px;">image-types.ts</span>
<svg style="left:96px;top:202px" width="16" height="16" viewBox="0 0 16 16" fill="none" ><rect x="2" y="2" width="12" height="12" rx="2" fill="#4b85f0"/><text x="3.600" y="12" textLength="9" lengthAdjust="spacingAndGlyphs" font-family="Liberation Sans,sans-serif" font-weight="bold" font-size="9.600" fill="#fff">TS</text></svg>
<span class="t" style="left:115px;top:200px;color:#5f9bd0;letter-spacing:0.321px;">member.ts</span>
<svg style="left:39.1px;top:221.5px" width="16" height="16" viewBox="0 0 16 16" fill="none" ><path d="M5.95 4.1L10.05 8L5.95 11.9" stroke="#b4b8bf" stroke-width="1.1" stroke-linecap="round" stroke-linejoin="round"/></svg>
<svg style="left:60px;top:222px" width="16" height="16" viewBox="0 0 16 16" fill="none" ><path d="M1.5 4.2 a1.2 1.2 0 0 1 1.2-1.2 h3.1 a1.2 1.2 0 0 1 .85.35 l1.25 1.25 h5.4 a1.2 1.2 0 0 1 1.2 1.2 v6 a1.2 1.2 0 0 1-1.2 1.2 h-10.6 a1.2 1.2 0 0 1-1.2-1.2 z" fill="#3f3f45" stroke="#ced0d6" stroke-width="1.1" stroke-linejoin="round"/></svg>
<span class="t" style="left:79px;top:220px;letter-spacing:0.339px;">components</span>
<svg style="left:39.1px;top:241.5px" width="16" height="16" viewBox="0 0 16 16" fill="none" ><path d="M5.95 4.1L10.05 8L5.95 11.9" stroke="#b4b8bf" stroke-width="1.1" stroke-linecap="round" stroke-linejoin="round"/></svg>
<svg style="left:60px;top:242px" width="16" height="16" viewBox="0 0 16 16" fill="none" ><path d="M1.5 4.2 a1.2 1.2 0 0 1 1.2-1.2 h3.1 a1.2 1.2 0 0 1 .85.35 l1.25 1.25 h5.4 a1.2 1.2 0 0 1 1.2 1.2 v6 a1.2 1.2 0 0 1-1.2 1.2 h-10.6 a1.2 1.2 0 0 1-1.2-1.2 z" fill="#3f3f45" stroke="#ced0d6" stroke-width="1.1" stroke-linejoin="round"/></svg>
<span class="t" style="left:79px;top:240px;letter-spacing:0.353px;">layouts</span>
<svg style="left:39.1px;top:261.5px" width="16" height="16" viewBox="0 0 16 16" fill="none" ><path d="M5.95 4.1L10.05 8L5.95 11.9" stroke="#b4b8bf" stroke-width="1.1" stroke-linecap="round" stroke-linejoin="round"/></svg>
<svg style="left:60px;top:262px" width="16" height="16" viewBox="0 0 16 16" fill="none" ><path d="M1.5 4.2 a1.2 1.2 0 0 1 1.2-1.2 h3.1 a1.2 1.2 0 0 1 .85.35 l1.25 1.25 h5.4 a1.2 1.2 0 0 1 1.2 1.2 v6 a1.2 1.2 0 0 1-1.2 1.2 h-10.6 a1.2 1.2 0 0 1-1.2-1.2 z" fill="#3f3f45" stroke="#ced0d6" stroke-width="1.1" stroke-linejoin="round"/></svg>
<span class="t" style="left:79px;top:260px;letter-spacing:0.201px;">pages</span>
<svg style="left:39.5px;top:282px" width="16" height="16" viewBox="0 0 16 16" fill="none" ><path d="M4.1 5.95L8 10.05L11.9 5.95" stroke="#b4b8bf" stroke-width="1.1" stroke-linecap="round" stroke-linejoin="round"/></svg>
<svg style="left:60px;top:282px" width="16" height="16" viewBox="0 0 16 16" fill="none" ><path d="M1.5 4.2 a1.2 1.2 0 0 1 1.2-1.2 h3.1 a1.2 1.2 0 0 1 .85.35 l1.25 1.25 h5.4 a1.2 1.2 0 0 1 1.2 1.2 v6 a1.2 1.2 0 0 1-1.2 1.2 h-10.6 a1.2 1.2 0 0 1-1.2-1.2 z" fill="#3f3f45" stroke="#ced0d6" stroke-width="1.1" stroke-linejoin="round"/></svg>
<span class="t" style="left:79px;top:280px;letter-spacing:0.459px;">storyblok</span>
<svg style="left:78px;top:302px" width="16" height="16" viewBox="0 0 16 16" fill="none" ><path d="M5.6 .7H10.4Q10.9 .7 11.05 1.2L13.3 10.6Q11.9 9.9 10.3 9.6L8.3 3.5Q8 2.9 7.7 3.5L5.7 9.6Q4.1 9.9 2.7 10.6L4.95 1.2Q5.1 .7 5.6 .7Z" fill="#f6f7f9"/><path d="M5.1 11Q8 12.5 10.9 11Q11 12.9 9.4 13.7Q8.4 14.2 8.2 15.4Q8 15.9 7.8 15.4Q7.6 14.2 6.600 13.700Q5 12.900 5.100 11Z" fill="#ff5a1f"/></svg>
<span class="t" style="left:97px;top:300px;letter-spacing:0.188px;">CaseStudyList.astro</span>
<svg style="left:78px;top:322px" width="16" height="16" viewBox="0 0 16 16" fill="none" ><path d="M5.6 .7H10.4Q10.9 .7 11.05 1.2L13.3 10.6Q11.9 9.9 10.3 9.6L8.3 3.5Q8 2.9 7.7 3.5L5.7 9.6Q4.1 9.9 2.7 10.6L4.95 1.2Q5.1 .7 5.6 .7Z" fill="#f6f7f9"/><path d="M5.1 11Q8 12.5 10.9 11Q11 12.9 9.4 13.7Q8.4 14.2 8.2 15.4Q8 15.9 7.8 15.4Q7.6 14.2 6.600 13.700Q5 12.900 5.100 11Z" fill="#ff5a1f"/></svg>
<span class="t" style="left:97px;top:320px;letter-spacing:0.101px;">CaseStudySplitContentWithSVG.astro</span>
<svg style="left:78px;top:342px" width="16" height="16" viewBox="0 0 16 16" fill="none" ><path d="M5.6 .7H10.4Q10.9 .7 11.05 1.2L13.3 10.6Q11.9 9.9 10.3 9.6L8.3 3.5Q8 2.9 7.7 3.5L5.7 9.6Q4.1 9.9 2.7 10.6L4.95 1.2Q5.1 .7 5.6 .7Z" fill="#f6f7f9"/><path d="M5.1 11Q8 12.5 10.9 11Q11 12.9 9.4 13.7Q8.4 14.2 8.2 15.4Q8 15.9 7.8 15.4Q7.6 14.2 6.600 13.700Q5 12.900 5.100 11Z" fill="#ff5a1f"/></svg>
<span class="t" style="left:97px;top:340px;letter-spacing:0.258px;">CaseStudyTitleContent.astro</span>
<svg style="left:78px;top:362px" width="16" height="16" viewBox="0 0 16 16" fill="none" ><path d="M5.6 .7H10.4Q10.9 .7 11.05 1.2L13.3 10.6Q11.9 9.9 10.3 9.6L8.3 3.5Q8 2.9 7.7 3.5L5.7 9.6Q4.1 9.9 2.7 10.6L4.95 1.2Q5.1 .7 5.6 .7Z" fill="#f6f7f9"/><path d="M5.1 11Q8 12.5 10.9 11Q11 12.9 9.4 13.7Q8.4 14.2 8.2 15.4Q8 15.9 7.8 15.4Q7.6 14.2 6.600 13.700Q5 12.900 5.100 11Z" fill="#ff5a1f"/></svg>
<span class="t" style="left:97px;top:360px;letter-spacing:0.151px;">ComposableGridItem.astro</span>
<svg style="left:78px;top:382px" width="16" height="16" viewBox="0 0 16 16" fill="none" ><path d="M5.6 .7H10.4Q10.9 .7 11.05 1.2L13.3 10.6Q11.9 9.9 10.3 9.6L8.3 3.5Q8 2.9 7.7 3.5L5.7 9.6Q4.1 9.9 2.7 10.6L4.95 1.2Q5.1 .7 5.6 .7Z" fill="#f6f7f9"/><path d="M5.1 11Q8 12.5 10.9 11Q11 12.9 9.4 13.7Q8.4 14.2 8.2 15.4Q8 15.9 7.8 15.4Q7.6 14.2 6.600 13.700Q5 12.900 5.100 11Z" fill="#ff5a1f"/></svg>
<span class="t" style="left:97px;top:380px;letter-spacing:0.169px;">Grid.astro</span>
<svg style="left:78px;top:402px" width="16" height="16" viewBox="0 0 16 16" fill="none" ><path d="M5.6 .7H10.4Q10.9 .7 11.05 1.2L13.3 10.6Q11.9 9.9 10.3 9.6L8.3 3.5Q8 2.9 7.7 3.5L5.7 9.6Q4.1 9.9 2.7 10.6L4.95 1.2Q5.1 .7 5.6 .7Z" fill="#f6f7f9"/><path d="M5.1 11Q8 12.5 10.9 11Q11 12.9 9.4 13.7Q8.4 14.2 8.2 15.4Q8 15.9 7.8 15.4Q7.6 14.2 6.600 13.700Q5 12.900 5.100 11Z" fill="#ff5a1f"/></svg>
<span class="t" style="left:97px;top:400px;letter-spacing:0.167px;">GridItem.astro</span>
<svg style="left:78px;top:422px" width="16" height="16" viewBox="0 0 16 16" fill="none" ><path d="M5.6 .7H10.4Q10.9 .7 11.05 1.2L13.3 10.6Q11.9 9.9 10.3 9.6L8.3 3.5Q8 2.9 7.7 3.5L5.7 9.6Q4.1 9.9 2.7 10.6L4.95 1.2Q5.1 .7 5.6 .7Z" fill="#f6f7f9"/><path d="M5.1 11Q8 12.5 10.9 11Q11 12.9 9.4 13.7Q8.4 14.2 8.2 15.4Q8 15.9 7.8 15.4Q7.6 14.2 6.600 13.700Q5 12.900 5.100 11Z" fill="#ff5a1f"/></svg>
<span class="t" style="left:97px;top:420px;letter-spacing:0.197px;">Hero.astro</span>
<svg style="left:78px;top:442px" width="16" height="16" viewBox="0 0 16 16" fill="none" ><path d="M5.6 .7H10.4Q10.9 .7 11.05 1.2L13.3 10.6Q11.9 9.9 10.3 9.6L8.3 3.5Q8 2.9 7.7 3.5L5.7 9.6Q4.1 9.9 2.7 10.6L4.95 1.2Q5.1 .7 5.6 .7Z" fill="#f6f7f9"/><path d="M5.1 11Q8 12.5 10.9 11Q11 12.9 9.4 13.7Q8.4 14.2 8.2 15.4Q8 15.9 7.8 15.4Q7.6 14.2 6.600 13.700Q5 12.900 5.100 11Z" fill="#ff5a1f"/></svg>
<span class="t" style="left:97px;top:440px;letter-spacing:0.154px;">HTML.astro</span>
<svg style="left:78px;top:462px" width="16" height="16" viewBox="0 0 16 16" fill="none" ><path d="M5.6 .7H10.4Q10.9 .7 11.05 1.2L13.3 10.6Q11.9 9.9 10.3 9.6L8.3 3.5Q8 2.9 7.7 3.5L5.7 9.6Q4.1 9.9 2.7 10.6L4.95 1.2Q5.1 .7 5.6 .7Z" fill="#f6f7f9"/><path d="M5.1 11Q8 12.5 10.9 11Q11 12.9 9.4 13.7Q8.4 14.2 8.2 15.4Q8 15.9 7.8 15.4Q7.6 14.2 6.600 13.700Q5 12.900 5.100 11Z" fill="#ff5a1f"/></svg>
<span class="t" style="left:97px;top:460px;letter-spacing:0.247px;">Icon.astro</span>
<svg style="left:78px;top:482px" width="16" height="16" viewBox="0 0 16 16" fill="none" ><path d="M5.6 .7H10.4Q10.9 .7 11.05 1.2L13.3 10.6Q11.9 9.9 10.3 9.6L8.3 3.5Q8 2.9 7.7 3.5L5.7 9.6Q4.1 9.9 2.7 10.6L4.95 1.2Q5.1 .7 5.6 .7Z" fill="#f6f7f9"/><path d="M5.1 11Q8 12.5 10.9 11Q11 12.9 9.4 13.7Q8.4 14.2 8.2 15.4Q8 15.9 7.8 15.4Q7.6 14.2 6.600 13.700Q5 12.900 5.100 11Z" fill="#ff5a1f"/></svg>
<span class="t" style="left:97px;top:480px;letter-spacing:0.14px;">LeadIn.astro</span>
<svg style="left:78px;top:502px" width="16" height="16" viewBox="0 0 16 16" fill="none" ><path d="M5.6 .7H10.4Q10.9 .7 11.05 1.2L13.3 10.6Q11.9 9.9 10.3 9.6L8.3 3.5Q8 2.9 7.7 3.5L5.7 9.6Q4.1 9.9 2.7 10.6L4.95 1.2Q5.1 .7 5.6 .7Z" fill="#f6f7f9"/><path d="M5.1 11Q8 12.5 10.9 11Q11 12.9 9.4 13.7Q8.4 14.2 8.2 15.4Q8 15.9 7.8 15.4Q7.6 14.2 6.600 13.700Q5 12.900 5.100 11Z" fill="#ff5a1f"/></svg>
<span class="t" style="left:97px;top:500px;letter-spacing:0.269px;">List.astro</span>
<svg style="left:78px;top:522px" width="16" height="16" viewBox="0 0 16 16" fill="none" ><path d="M5.6 .7H10.4Q10.9 .7 11.05 1.2L13.3 10.6Q11.9 9.9 10.3 9.6L8.3 3.5Q8 2.9 7.7 3.5L5.7 9.6Q4.1 9.9 2.7 10.6L4.95 1.2Q5.1 .7 5.6 .7Z" fill="#f6f7f9"/><path d="M5.1 11Q8 12.5 10.9 11Q11 12.9 9.4 13.7Q8.4 14.2 8.2 15.4Q8 15.9 7.8 15.4Q7.6 14.2 6.600 13.700Q5 12.900 5.100 11Z" fill="#ff5a1f"/></svg>
<span class="t" style="left:97px;top:520px;letter-spacing:0.236px;">ListItem.astro</span>
<svg style="left:78px;top:542px" width="16" height="16" viewBox="0 0 16 16" fill="none" ><path d="M5.6 .7H10.4Q10.9 .7 11.05 1.2L13.3 10.6Q11.9 9.9 10.3 9.6L8.3 3.5Q8 2.9 7.7 3.5L5.7 9.6Q4.1 9.9 2.7 10.6L4.95 1.2Q5.1 .7 5.6 .7Z" fill="#f6f7f9"/><path d="M5.1 11Q8 12.5 10.9 11Q11 12.9 9.4 13.7Q8.4 14.2 8.2 15.4Q8 15.9 7.8 15.4Q7.6 14.2 6.600 13.700Q5 12.900 5.100 11Z" fill="#ff5a1f"/></svg>
<span class="t" style="left:97px;top:540px;letter-spacing:0.312px;">Markdown.astro</span>
<svg style="left:78px;top:562px" width="16" height="16" viewBox="0 0 16 16" fill="none" ><path d="M5.6 .7H10.4Q10.9 .7 11.05 1.2L13.3 10.6Q11.9 9.9 10.3 9.6L8.3 3.5Q8 2.9 7.7 3.5L5.7 9.6Q4.1 9.9 2.7 10.6L4.95 1.2Q5.1 .7 5.6 .7Z" fill="#f6f7f9"/><path d="M5.1 11Q8 12.5 10.9 11Q11 12.9 9.4 13.7Q8.4 14.2 8.2 15.4Q8 15.9 7.8 15.4Q7.6 14.2 6.600 13.700Q5 12.900 5.100 11Z" fill="#ff5a1f"/></svg>
<span class="t" style="left:97px;top:560px;letter-spacing:0.212px;">NewsHeading.astro</span>
<svg style="left:78px;top:582px" width="16" height="16" viewBox="0 0 16 16" fill="none" ><path d="M5.6 .7H10.4Q10.9 .7 11.05 1.2L13.3 10.6Q11.9 9.9 10.3 9.6L8.3 3.5Q8 2.9 7.7 3.5L5.7 9.6Q4.1 9.9 2.7 10.6L4.95 1.2Q5.1 .7 5.6 .7Z" fill="#f6f7f9"/><path d="M5.1 11Q8 12.5 10.9 11Q11 12.9 9.4 13.7Q8.4 14.2 8.2 15.4Q8 15.9 7.8 15.4Q7.6 14.2 6.600 13.700Q5 12.900 5.100 11Z" fill="#ff5a1f"/></svg>
<span class="t" style="left:97px;top:580px;letter-spacing:0.227px;">NewsPostList.astro</span>
<div class="abs" style="left:12px;top:600px;width:283px;height:20px;border-radius:4px;background:#48588a"></div>
<svg style="left:78px;top:602px" width="16" height="16" viewBox="0 0 16 16" fill="none" ><path d="M5.6 .7H10.4Q10.9 .7 11.05 1.2L13.3 10.6Q11.9 9.9 10.3 9.6L8.3 3.5Q8 2.9 7.7 3.5L5.7 9.6Q4.1 9.9 2.7 10.6L4.95 1.2Q5.1 .7 5.6 .7Z" fill="#f6f7f9"/><path d="M5.1 11Q8 12.5 10.9 11Q11 12.9 9.4 13.7Q8.4 14.2 8.2 15.4Q8 15.9 7.8 15.4Q7.6 14.2 6.600 13.700Q5 12.900 5.100 11Z" fill="#ff5a1f"/></svg>
<span class="t" style="left:97px;top:600px;letter-spacing:0.24px;">NewsSection.astro</span>
<svg style="left:78px;top:622px" width="16" height="16" viewBox="0 0 16 16" fill="none" ><path d="M5.6 .7H10.4Q10.9 .7 11.05 1.2L13.3 10.6Q11.9 9.9 10.3 9.6L8.3 3.5Q8 2.9 7.7 3.5L5.7 9.6Q4.1 9.9 2.7 10.6L4.95 1.2Q5.1 .7 5.6 .7Z" fill="#f6f7f9"/><path d="M5.1 11Q8 12.5 10.9 11Q11 12.9 9.4 13.7Q8.4 14.2 8.2 15.4Q8 15.9 7.8 15.4Q7.6 14.2 6.600 13.700Q5 12.900 5.100 11Z" fill="#ff5a1f"/></svg>
<span class="t" style="left:97px;top:620px;letter-spacing:0.123px;">Page.astro</span>
<svg style="left:78px;top:642px" width="16" height="16" viewBox="0 0 16 16" fill="none" ><path d="M5.6 .7H10.4Q10.9 .7 11.05 1.2L13.3 10.6Q11.9 9.9 10.3 9.6L8.3 3.5Q8 2.9 7.7 3.5L5.7 9.6Q4.1 9.9 2.7 10.6L4.95 1.2Q5.1 .7 5.6 .7Z" fill="#f6f7f9"/><path d="M5.1 11Q8 12.5 10.9 11Q11 12.9 9.4 13.7Q8.4 14.2 8.2 15.4Q8 15.9 7.8 15.4Q7.6 14.2 6.600 13.700Q5 12.900 5.100 11Z" fill="#ff5a1f"/></svg>
<span class="t" style="left:97px;top:640px;letter-spacing:0.218px;">SplitContentWithImage.astro</span>
<svg style="left:78px;top:662px" width="16" height="16" viewBox="0 0 16 16" fill="none" ><path d="M5.6 .7H10.4Q10.9 .7 11.05 1.2L13.3 10.6Q11.9 9.9 10.3 9.6L8.3 3.5Q8 2.9 7.7 3.5L5.7 9.6Q4.1 9.9 2.7 10.6L4.95 1.2Q5.1 .7 5.6 .7Z" fill="#f6f7f9"/><path d="M5.1 11Q8 12.5 10.9 11Q11 12.9 9.4 13.7Q8.4 14.2 8.2 15.4Q8 15.9 7.8 15.4Q7.6 14.2 6.600 13.700Q5 12.900 5.100 11Z" fill="#ff5a1f"/></svg>
<span class="t" style="left:97px;top:660px;letter-spacing:0.35px;">TeamMember.astro</span>
<svg style="left:78px;top:682px" width="16" height="16" viewBox="0 0 16 16" fill="none" ><path d="M5.6 .7H10.4Q10.9 .7 11.05 1.2L13.3 10.6Q11.9 9.9 10.3 9.6L8.3 3.5Q8 2.9 7.7 3.5L5.7 9.6Q4.1 9.9 2.7 10.6L4.95 1.2Q5.1 .7 5.6 .7Z" fill="#f6f7f9"/><path d="M5.1 11Q8 12.5 10.9 11Q11 12.9 9.4 13.7Q8.4 14.2 8.2 15.4Q8 15.9 7.8 15.4Q7.6 14.2 6.600 13.700Q5 12.900 5.100 11Z" fill="#ff5a1f"/></svg>
<span class="t" style="left:97px;top:680px;letter-spacing:0.166px;">TimelineGrid.astro</span>
<svg style="left:78px;top:702px" width="16" height="16" viewBox="0 0 16 16" fill="none" ><path d="M5.6 .7H10.4Q10.9 .7 11.05 1.2L13.3 10.6Q11.9 9.9 10.3 9.6L8.3 3.5Q8 2.9 7.7 3.5L5.7 9.6Q4.1 9.9 2.7 10.6L4.95 1.2Q5.1 .7 5.6 .7Z" fill="#f6f7f9"/><path d="M5.1 11Q8 12.5 10.9 11Q11 12.9 9.4 13.7Q8.4 14.2 8.2 15.4Q8 15.9 7.8 15.4Q7.6 14.2 6.600 13.700Q5 12.900 5.100 11Z" fill="#ff5a1f"/></svg>
<span class="t" style="left:97px;top:700px;letter-spacing:0.174px;">TimelineGridItem.astro</span>
<svg style="left:78px;top:722px" width="16" height="16" viewBox="0 0 16 16" fill="none" ><path d="M5.6 .7H10.4Q10.9 .7 11.05 1.2L13.3 10.6Q11.9 9.9 10.3 9.6L8.3 3.5Q8 2.9 7.7 3.5L5.7 9.6Q4.1 9.9 2.7 10.6L4.95 1.2Q5.1 .7 5.6 .7Z" fill="#f6f7f9"/><path d="M5.1 11Q8 12.5 10.9 11Q11 12.9 9.4 13.7Q8.4 14.2 8.2 15.4Q8 15.9 7.8 15.4Q7.6 14.2 6.600 13.700Q5 12.900 5.100 11Z" fill="#ff5a1f"/></svg>
<span class="t" style="left:97px;top:720px;letter-spacing:0.283px;">TitleSection.astro</span>
<svg style="left:39.1px;top:741.5px" width="16" height="16" viewBox="0 0 16 16" fill="none" ><path d="M5.95 4.1L10.05 8L5.95 11.9" stroke="#b4b8bf" stroke-width="1.1" stroke-linecap="round" stroke-linejoin="round"/></svg>
<svg style="left:60px;top:742px" width="16" height="16" viewBox="0 0 16 16" fill="none" ><path d="M1.5 4.2 a1.2 1.2 0 0 1 1.2-1.2 h3.1 a1.2 1.2 0 0 1 .85.35 l1.25 1.25 h5.4 a1.2 1.2 0 0 1 1.2 1.2 v6 a1.2 1.2 0 0 1-1.2 1.2 h-10.6 a1.2 1.2 0 0 1-1.2-1.2 z" fill="#3f3f45" stroke="#ced0d6" stroke-width="1.1" stroke-linejoin="round"/></svg>
<span class="t" style="left:79px;top:740px;letter-spacing:0.337px;">styles</span>
<svg style="left:42px;top:762px" width="16" height="16" viewBox="0 0 16 16" fill="none" ><path d="M2 3.5h12M2 6.5h9M2 9.5h12M2 12.5h7" stroke="#ced0d6" stroke-width="1.1"/></svg>
<span class="t" style="left:61px;top:760px;color:#8a8f2c;letter-spacing:0.123px;">.env</span>
<svg style="left:42px;top:782px" width="16" height="16" viewBox="0 0 16 16" fill="none" ><circle cx="8" cy="8" r="6.4" stroke="#ced0d6" stroke-width="1.1" fill="#3a3c42"/><path d="M3.6 12.4L12.4 3.6" stroke="#ced0d6" stroke-width="1.1"/></svg>
<span class="t" style="left:61px;top:780px;letter-spacing:0.295px;">.gitignore</span>
<svg style="left:42px;top:802px" width="16" height="16" viewBox="0 0 16 16" fill="none" ><rect x="2" y="2" width="12" height="12" rx="2" fill="#f2bd55"/><text x="4" y="12" textLength="8.400" lengthAdjust="spacingAndGlyphs" font-family="Liberation Sans,sans-serif" font-weight="bold" font-size="9.600" fill="#3d2a0c">JS</text></svg>
<span class="t" style="left:61px;top:800px;letter-spacing:0.27px;">astro.config.mjs</span>
<svg style="left:42px;top:822px" width="16" height="16" viewBox="0 0 16 16" fill="none" ><path d="M6.3 2.5 h-.6 a1.6 1.6 0 0 0-1.6 1.6 v2.1 a1.3 1.3 0 0 1-1.3 1.3 v1 a1.3 1.3 0 0 1 1.3 1.3 v2.1 a1.6 1.6 0 0 0 1.6 1.6 h.6" stroke="#a98be6" stroke-width="1.15" stroke-linejoin="round" stroke-linecap="round"/><path d="M9.7 2.5 h.6 a1.6 1.6 0 0 1 1.6 1.6 v2.1 a1.3 1.3 0 0 0 1.3 1.3 v1 a1.3 1.3 0 0 0-1.3 1.3 v2.1 a1.6 1.6 0 0 1-1.6 1.6 h-.6" stroke="#a98be6" stroke-width="1.15" stroke-linejoin="round" stroke-linecap="round"/></svg>
<span class="t" style="left:61px;top:820px;letter-spacing:0.185px;">package.json</span>
<svg style="left:42px;top:842px" width="16" height="16" viewBox="0 0 16 16" fill="none" ><path d="M3.5 5.4l3-3h4a1.1 1.1 0 0 1 1.1 1.1v9a1.1 1.1 0 0 1-1.1 1.1h-5.9a1.1 1.1 0 0 1-1.1-1.1z" fill="#45262a"/><path d="M9.6 13.5 h-5 a1.1 1.1 0 0 1-1.1-1.1 v-7 l3-3 h4 a1.1 1.1 0 0 1 1.1 1.1 v5.2" stroke="#e0575c" stroke-width="1.1" stroke-linecap="round" stroke-linejoin="round"/><path d="M6.6 2.5 v2.2 a.8.8 0 0 1-.8.8 h-2.2" stroke="#e0575c" stroke-width="1.1" stroke-linejoin="round"/><rect x="10" y="9.5" width="6" height="6.5" fill="#262a35"/><path d="M10.9 10.6l1.9 2.5 1.9-2.5M12.8 13.1v2.4" stroke="#ced0d6" stroke-width="1.2" /></svg>
<span class="t" style="left:61px;top:840px;letter-spacing:0.351px;">pnpm-lock.yaml</span>
<svg style="left:42px;top:862px" width="16" height="16" viewBox="0 0 16 16" fill="none" ><rect x="2" y="2" width="12" height="12" rx="2" fill="#f2bd55"/><text x="4" y="12" textLength="8.400" lengthAdjust="spacingAndGlyphs" font-family="Liberation Sans,sans-serif" font-weight="bold" font-size="9.600" fill="#3d2a0c">JS</text></svg>
<span class="t" style="left:61px;top:860px;letter-spacing:0.337px;">run-server.mjs</span>
<svg style="left:42px;top:882px" width="16" height="16" viewBox="0 0 16 16" fill="none" ><path d="M6.3 2.5 h-.6 a1.6 1.6 0 0 0-1.6 1.6 v2.1 a1.3 1.3 0 0 1-1.3 1.3 v1 a1.3 1.3 0 0 1 1.3 1.3 v2.1 a1.6 1.6 0 0 0 1.6 1.6 h.6" stroke="#a98be6" stroke-width="1.15" stroke-linejoin="round" stroke-linecap="round"/><path d="M9.7 2.5 h.6 a1.6 1.6 0 0 1 1.6 1.6 v2.1 a1.3 1.3 0 0 0 1.3 1.3 v1 a1.3 1.3 0 0 0-1.3 1.3 v2.1 a1.6 1.6 0 0 1-1.6 1.6 h-.6" stroke="#a98be6" stroke-width="1.15" stroke-linejoin="round" stroke-linecap="round"/></svg>
<span class="t" style="left:61px;top:880px;letter-spacing:0.338px;">tsconfig.json</span>
<svg style="left:3.1px;top:901.5px" width="16" height="16" viewBox="0 0 16 16" fill="none" ><path d="M5.95 4.1L10.05 8L5.95 11.9" stroke="#b4b8bf" stroke-width="1.1" stroke-linecap="round" stroke-linejoin="round"/></svg>
<svg style="left:24px;top:902px" width="16" height="16" viewBox="0 0 16 16" fill="none" ><path d="M1.6 13.5v-8h3.6v8M5.2 13.5v-11h4v11M9.2 13.5v-6h3.7v6M1.6 13.5h11.3" stroke="#ced0d6" stroke-width="1.1" stroke-linejoin="round" fill="none"/></svg>
<span class="t" style="left:43px;top:900px;letter-spacing:0.091px;">External Libraries</span>
<svg style="left:3.1px;top:921.5px" width="16" height="16" viewBox="0 0 16 16" fill="none" ><path d="M5.95 4.1L10.05 8L5.95 11.9" stroke="#b4b8bf" stroke-width="1.1" stroke-linecap="round" stroke-linejoin="round"/></svg>
<svg style="left:24px;top:922px" width="16" height="16" viewBox="0 0 16 16" fill="none" ><path d="M1.5 5.5h5M1.5 8.5h9.5M1.5 11.5h12M1.5 14.5h8" stroke="#ced0d6" stroke-width="1.1"/><circle cx="11.8" cy="4.2" r="3.7" fill="#4b85f0"/><path d="M11.8 2.2v2.2l1.4.9" stroke="#fff" stroke-width="1" fill="none" stroke-linecap="round"/></svg>
<span class="t" style="left:43px;top:920px;letter-spacing:0.131px;">Scratches and Consoles</span>
</div>
<div class="abs" style="left:351px;top:85px;width:8px;height:942px;border-radius:4px;background:#3f434e"></div>
<div class="abs" style="left:44px;top:1040px;width:276px;height:7px;border-radius:4px;background:#3f434e"></div>
<div id="editor">
<div class="abs" style="left:0;top:396px;width:1516px;height:22px;background:#2f3340"></div>
<div class="abs" style="left:67px;top:264px;width:54.6px;height:22px;background:#3a3f4d"></div>
<div class="abs" style="left:67px;top:396px;width:62.4px;height:22px;background:#3d4250"></div>
<div class="abs" style="left:64px;top:0;width:1px;height:944px;background:#454b5e"></div>
<div class="abs" style="left:1003px;top:0;width:1px;height:944px;background:#353a46"></div>
<div class="abs" style="left:0;top:944px;width:1516px;height:1px;background:#393e4b"></div>
<div class="abs" style="left:97px;top:132px;width:1px;height:66px;background:#3b404d"></div>
<div class="abs" style="left:128px;top:154px;width:1px;height:22px;background:#3b404d"></div>
<div class="abs" style="left:97px;top:352px;width:1px;height:22px;background:#3b404d"></div>
<span class="t code" style="right:1493.8px;top:0px;line-height:22px;height:22px;color:#5d6783">1</span>
<span class="t code" style="right:1493.8px;top:22px;line-height:22px;height:22px;color:#5d6783">2</span>
<span class="t code" style="right:1493.8px;top:44px;line-height:22px;height:22px;color:#5d6783">3</span>
<span class="t code" style="right:1493.8px;top:66px;line-height:22px;height:22px;color:#5d6783">4</span>
<span class="t code" style="right:1493.8px;top:88px;line-height:22px;height:22px;color:#5d6783">5</span>
<span class="t code" style="right:1493.8px;top:110px;line-height:22px;height:22px;color:#5d6783">6</span>
<span class="t code" style="right:1493.8px;top:132px;line-height:22px;height:22px;color:#5d6783">7</span>
<span class="t code" style="right:1493.8px;top:154px;line-height:22px;height:22px;color:#5d6783">8</span>
<span class="t code" style="right:1493.8px;top:176px;line-height:22px;height:22px;color:#5d6783">9</span>
<span class="t code" style="right:1493.8px;top:198px;line-height:22px;height:22px;color:#5d6783">10</span>
<span class="t code" style="right:1493.8px;top:220px;line-height:22px;height:22px;color:#5d6783">11</span>
<span class="t code" style="right:1493.8px;top:242px;line-height:22px;height:22px;color:#5d6783">12</span>
<span class="t code" style="right:1493.8px;top:264px;line-height:22px;height:22px;color:#5d6783">13</span>
<span class="t code" style="right:1493.8px;top:286px;line-height:22px;height:22px;color:#5d6783">14</span>
<span class="t code" style="right:1493.8px;top:308px;line-height:22px;height:22px;color:#5d6783">15</span>
<span class="t code" style="right:1493.8px;top:330px;line-height:22px;height:22px;color:#5d6783">16</span>
<span class="t code" style="right:1493.8px;top:352px;line-height:22px;height:22px;color:#5d6783">17</span>
<span class="t code" style="right:1493.8px;top:374px;line-height:22px;height:22px;color:#5d6783">18</span>
<span class="t code" style="right:1493.8px;top:396px;line-height:22px;height:22px;color:#d5d8df">19</span>
<span class="t code" style="left:67px;top:0px;line-height:22px;height:22px"><span style="color:#c68ddb">---</span></span>
<span class="t code" style="left:67px;top:22px;line-height:22px;height:22px"><span style="color:#c68ddb">import</span><span style="color:#dcdfe5"> </span><span style="color:#7fa6d4">StoryblokComponent</span><span style="color:#dcdfe5"> </span><span style="color:#c68ddb">from</span><span style="color:#dcdfe5"> </span><span style="color:#98c77b">&quot;@storyblok/astro/StoryblokComponent.astro&quot;</span><span style="color:#5c82b5">;</span></span>
<span class="t code" style="left:67px;top:44px;line-height:22px;height:22px"><span style="color:#c68ddb">const</span><span style="color:#5c82b5"> { </span><span style="color:#dcdfe5">blok</span><span style="color:#5c82b5"> } = </span><span style="color:#f0c67d">Astro</span><span style="color:#5c82b5">.</span><span style="color:#e0707a">props</span></span>
<span class="t code" style="left:67px;top:66px;line-height:22px;height:22px"><span style="color:#c68ddb">---</span></span>
<span class="t code" style="left:67px;top:88px;line-height:22px;height:22px"><span style="color:#5c82b5">&lt;</span><span style="color:#c68ddb">section</span><span style="color:#dcdfe5"> </span><span style="color:#dd9a6b">class</span><span style="color:#98c77b">=&quot;news-section&quot;</span><span style="color:#5c82b5">&gt;</span></span>
<span class="t code" style="left:67px;top:110px;line-height:22px;height:22px"><span style="color:#5c82b5">    {</span></span>
<span class="t code" style="left:67px;top:132px;line-height:22px;height:22px"><span style="color:#dcdfe5">        blok</span><span style="color:#5c82b5">.</span><span style="color:#e0707a">blocks</span><span style="color:#5c82b5">?.</span><span style="color:#6ba3e3">map</span><span style="color:#5c82b5">((</span><span class="err" style="color:#dd9a6b">blok</span><span style="color:#5c82b5">) =&gt; {</span></span>
<span class="t code" style="left:67px;top:154px;line-height:22px;height:22px"><span style="color:#c68ddb">            return</span><span style="color:#5c82b5"> &lt;</span><span style="color:#c68ddb">StoryblokComponent</span><span style="color:#dcdfe5"> </span><span style="color:#dd9a6b">blok</span><span style="color:#98c77b">=</span><span style="color:#5c82b5">{</span><span style="color:#dd9a6b">blok</span><span style="color:#5c82b5">} /&gt;;</span></span>
<span class="t code" style="left:67px;top:176px;line-height:22px;height:22px"><span style="color:#5c82b5">        })</span></span>
<span class="t code" style="left:67px;top:198px;line-height:22px;height:22px"><span style="color:#5c82b5">    }</span></span>
<span class="t code" style="left:67px;top:220px;line-height:22px;height:22px"><span style="color:#5c82b5">&lt;/</span><span style="color:#c68ddb">section</span><span style="color:#5c82b5">&gt;</span></span>
<span class="t code" style="left:67px;top:264px;line-height:22px;height:22px"><span style="color:#5c82b5">&lt;</span><span style="color:#c68ddb">style</span><span style="color:#5c82b5">&gt;</span></span>
<span class="t code" style="left:67px;top:286px;line-height:22px;height:22px"><span style="color:#c68ddb">    @reference</span><span style="color:#dcdfe5"> </span><span style="color:#98c77b">&quot;../styles/global.css&quot;</span><span style="color:#5c82b5">;</span></span>
<span class="t code" style="left:67px;top:330px;line-height:22px;height:22px"><span style="color:#5c82b5">    .</span><span style="color:#8fc3dc">news-section</span><span style="color:#5c82b5"> {</span></span>
<span class="t code" style="left:67px;top:352px;line-height:22px;height:22px"><span style="color:#c68ddb">        @apply</span><span style="color:#9ccfe4"> w-full lg:max-w-[64ch] mx-auto pb-0 last:pb-12</span><span style="color:#5c82b5">;</span></span>
<span class="t code" style="left:67px;top:374px;line-height:22px;height:22px"><span style="color:#5c82b5">    }</span></span>
<span class="t code" style="left:67px;top:396px;line-height:22px;height:22px"><span style="color:#5c82b5">&lt;/</span><span style="color:#c68ddb">style</span><span style="color:#5c82b5">&gt;</span></span>
<span class="t" style="left:103px;top:0;line-height:22px;height:22px;font-size:12.4px;color:#6c707a;letter-spacing:.15px">Show component usages</span>
<svg style="left:1445.8px;top:4.9px" width="16" height="16" viewBox="0 0 16 16" fill="none" ><circle cx="8" cy="8" r="5.900" fill="#dc5464"/><path d="M8 4.6v4.2" stroke="#282c37" stroke-width="1.6" stroke-linecap="round"/><circle cx="8" cy="11" r=".95" fill="#282c37"/></svg>
<span class="t" style="left:1462.4px;top:2px;font-size:12.5px;color:#c6c9d0">1</span>
<svg style="left:1475px;top:5.2px" width="16" height="16" viewBox="0 0 16 16" fill="none" ><path d="M4.55 9.7L8 6.3L11.45 9.7" stroke="#b9bcc4" stroke-width="1.1" stroke-linecap="round" stroke-linejoin="round"/></svg>
<svg style="left:1495.9px;top:5px" width="16" height="16" viewBox="0 0 16 16" fill="none" ><path d="M4.55 6.3L8 9.7L11.45 6.3" stroke="#b9bcc4" stroke-width="1.1" stroke-linecap="round" stroke-linejoin="round"/></svg>
<div class="abs" style="left:1502px;top:158px;width:14px;height:2px;background:#c9505b"></div>
</div>
</div></div>
</body></html>
